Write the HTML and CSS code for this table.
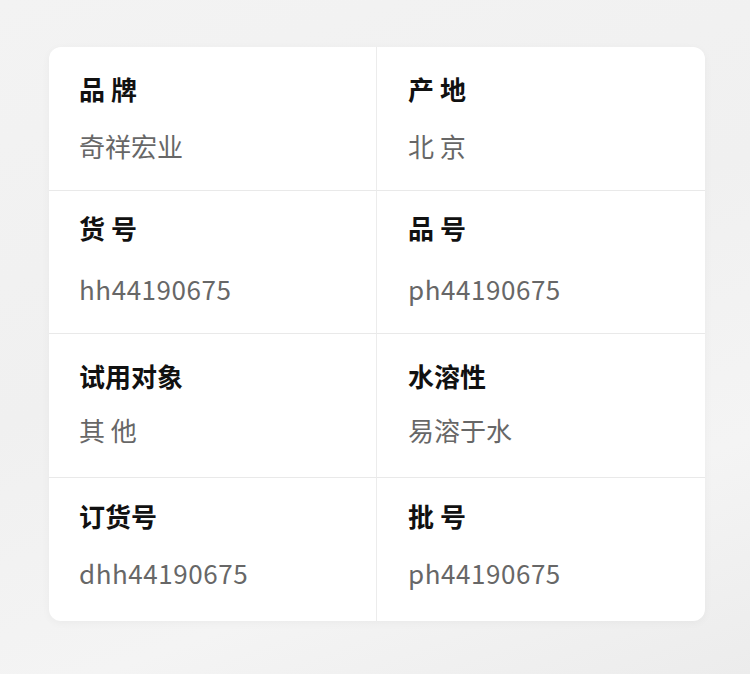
FILE: index.html
```html
<!DOCTYPE html>
<html>
<head>
    <meta charset="utf-8">
    <title>商品参数</title>
    <link rel="stylesheet" href="styles.css">
</head>
<body>
    <div class="spec-card">
        <div class="spec-cell">
            <div class="spec-label">品 牌</div>
            <div class="spec-value">奇祥宏业</div>
        </div>
        <div class="spec-cell">
            <div class="spec-label">产 地</div>
            <div class="spec-value">北 京</div>
        </div>
        <div class="spec-cell row-2">
            <div class="spec-label">货 号</div>
            <div class="spec-value code">hh44190675</div>
        </div>
        <div class="spec-cell row-2">
            <div class="spec-label">品 号</div>
            <div class="spec-value code">ph44190675</div>
        </div>
        <div class="spec-cell row-3">
            <div class="spec-label">试用对象</div>
            <div class="spec-value">其 他</div>
        </div>
        <div class="spec-cell row-3">
            <div class="spec-label">水溶性</div>
            <div class="spec-value">易溶于水</div>
        </div>
        <div class="spec-cell row-4">
            <div class="spec-label">订货号</div>
            <div class="spec-value code">dhh44190675</div>
        </div>
        <div class="spec-cell row-4">
            <div class="spec-label">批 号</div>
            <div class="spec-value code">ph44190675</div>
        </div>
    </div>
</body>
</html>
```

FILE: styles.css
```css
html, body {
    height: 100%;
}
body {
    margin: 0;
    padding: 47px 45px 0 49px;
    box-sizing: border-box;
    font-family: "Noto Sans CJK SC", "Noto Sans", sans-serif;
    background: linear-gradient(160deg, #f3f3f3 0%, #f0f0f0 45%, #f4f4f4 75%, #ececec 100%);
}
.spec-card {
    width: 656px;
    height: 574px;
    display: grid;
    grid-template-columns: 1fr 1fr;
    grid-template-rows: repeat(4, 1fr);
    background: #fff;
    border-radius: 12px;
    box-shadow: 0 2px 8px rgba(0, 0, 0, 0.04);
    overflow: hidden;
}
.spec-cell {
    padding: 22px 30px 0;
    border-bottom: 1px solid #e9e9e9;
}
.spec-cell:nth-child(odd) {
    border-right: 1px solid #ececec;
}
.spec-cell:nth-child(even) {
    padding-left: 31px;
}
.spec-cell:nth-last-child(-n+2) {
    border-bottom: none;
}
.spec-label {
    font-size: 26px;
    line-height: 39px;
    font-weight: 700;
    color: #111;
}
.spec-value {
    margin-top: 18px;
    font-size: 26px;
    line-height: 39px;
    font-weight: 400;
    color: #676767;
}
.spec-value.code {
    letter-spacing: 0.55px;
}
.row-2 {
    padding-top: 17px;
}
.row-2 .spec-value {
    margin-top: 22px;
}
.row-3 .spec-value {
    margin-top: 15px;
}
.row-4 {
    padding-top: 18px;
}
.row-4 .spec-value {
    margin-top: 18px;
}
```
